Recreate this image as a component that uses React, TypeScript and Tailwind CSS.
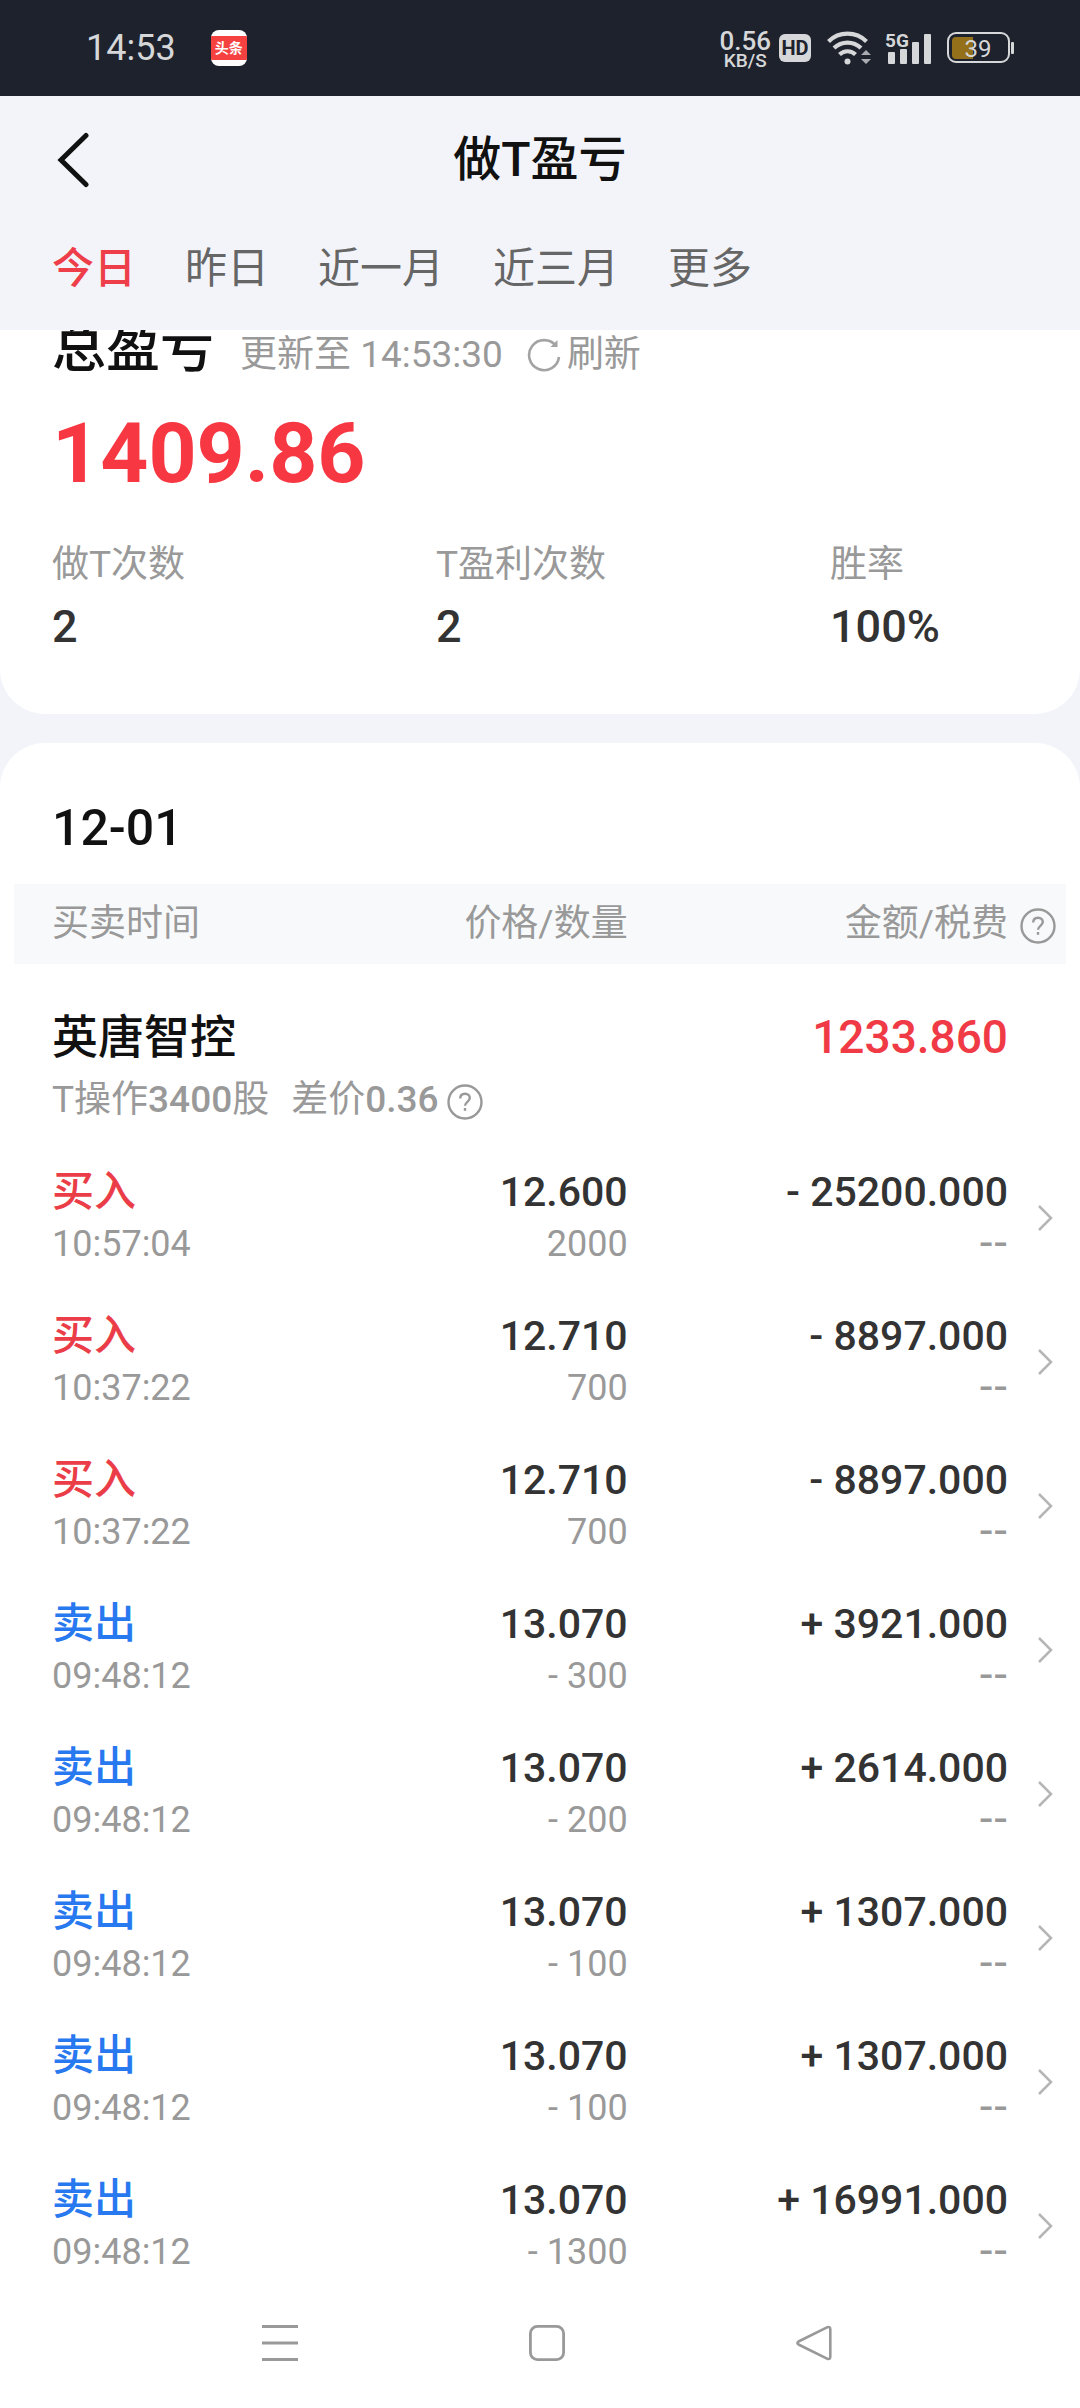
import { useState } from "react";

type Side = "buy" | "sell";

interface Trade {
  side: Side;
  time: string;
  price: string;
  qty: string;
  amount: string;
  fee: string;
}

const RANGES = ["今日", "昨日", "近一月", "近三月", "更多"];

const STATS = [
  { label: "做T次数", value: "2" },
  { label: "T盈利次数", value: "2" },
  { label: "胜率", value: "100%" },
];

const TRADES: Trade[] = [
  { side: "buy", time: "10:57:04", price: "12.600", qty: "2000", amount: "- 25200.000", fee: "--" },
  { side: "buy", time: "10:37:22", price: "12.710", qty: "700", amount: "- 8897.000", fee: "--" },
  { side: "buy", time: "10:37:22", price: "12.710", qty: "700", amount: "- 8897.000", fee: "--" },
  { side: "sell", time: "09:48:12", price: "13.070", qty: "- 300", amount: "+ 3921.000", fee: "--" },
  { side: "sell", time: "09:48:12", price: "13.070", qty: "- 200", amount: "+ 2614.000", fee: "--" },
  { side: "sell", time: "09:48:12", price: "13.070", qty: "- 100", amount: "+ 1307.000", fee: "--" },
  { side: "sell", time: "09:48:12", price: "13.070", qty: "- 100", amount: "+ 1307.000", fee: "--" },
  { side: "sell", time: "09:48:12", price: "13.070", qty: "- 1300", amount: "+ 16991.000", fee: "--" },
];

export default function App() {
  return (
    <div className="min-h-screen bg-white text-[#111] font-['Roboto','Noto_Sans_CJK_SC',sans-serif]">
      <StatusBar />
      <Header />
      <main className="bg-[#f3f4f9] flex flex-col gap-[29px]">
        <Summary />
        <DayCard />
      </main>
      <NavBar />
    </div>
  );
}

function StatusBar() {
  return (
    <div className="h-24 bg-[#1e222d] text-[#d6d7d9] flex items-center justify-between pl-[86px] pr-[66px]">
      <div className="flex items-center gap-[35px]">
        <span className="text-[36px] leading-none">14:53</span>
        <span className="size-9 rounded-lg bg-white flex items-center overflow-hidden">
          <span className="w-full h-6 bg-[#f5413f] text-white text-[14px] leading-6 font-bold text-center">头条</span>
        </span>
      </div>
      <div className="flex items-center">
        <div className="flex flex-col items-center font-medium mr-2 pt-1">
          <span className="text-[26px] leading-[22px]">0.56</span>
          <span className="text-[19px] leading-[18px]">KB/S</span>
        </div>
        <span className="w-8 h-7 rounded-md bg-[#d6d7d9] text-[#1e222d] text-[20px] leading-7 font-bold text-center mr-4">
          HD
        </span>
        <WifiIcon />
        <SignalIcon />
        <BatteryIcon />
      </div>
    </div>
  );
}

function Header() {
  const [range, setRange] = useState(RANGES[0]);

  return (
    <header className="bg-[#f3f4f9]">
      <div className="h-[124px] pt-1 grid grid-cols-[1fr_auto_1fr] items-center">
        <button aria-label="返回" className="justify-self-start ml-[52px]">
          <svg width="40" height="56" viewBox="0 0 40 56" fill="none" stroke="#111" strokeWidth="5" strokeLinecap="round">
            <path d="M34 3.500 9 28l25 24.500" />
          </svg>
        </button>
        <h1 className="text-[48px] leading-[60px] font-medium">做T盈亏</h1>
      </div>
      <nav className="flex gap-[49px] px-[52px] pt-[19px] pb-[31px]">
        {RANGES.map((r) => (
          <button
            key={r}
            onClick={() => setRange(r)}
            className={
              r === range
                ? "text-[42px] leading-[60px] font-medium text-[#ee3e49]"
                : "text-[42px] leading-[60px] text-[#666]"
            }
          >
            {r}
          </button>
        ))}
      </nav>
    </header>
  );
}

function Summary() {
  return (
    <section className="bg-white rounded-b-[45px] overflow-hidden px-[52px] pb-[57px]">
      {/* title row is partly scrolled under the header */}
      <div className="-mt-[11px] flex items-baseline leading-[60px]">
        <h2 className="text-[54px] font-medium">总盈亏</h2>
        <span className="ml-[26px] text-[37px] text-[#999]">更新至 14:53:30</span>
        <button className="ml-6 flex items-baseline gap-[6px] text-[37px] text-[#999]">
          <RefreshIcon />
          <span>刷新</span>
        </button>
      </div>
      <div className="mt-6 text-[84px] leading-[90px] font-bold text-[#f73843]">1409.86</div>
      <dl className="mt-[42px] grid grid-cols-[384fr_394fr_198fr]">
        {STATS.map((s) => (
          <div key={s.label}>
            <dt className="text-[37px] leading-[48px] text-[#999] whitespace-nowrap">{s.label}</dt>
            <dd className="mt-2 text-[45px] leading-[60px] font-medium text-[#333]">{s.value}</dd>
          </div>
        ))}
      </dl>
    </section>
  );
}

function DayCard() {
  return (
    <section className="bg-white rounded-t-[45px] px-[14px] pt-[55px]">
      <h2 className="pl-[38px] mb-[26px] text-[50px] leading-[60px] font-medium">12-01</h2>
      <table className="w-full table-fixed border-collapse">
        <colgroup>
          <col className="w-7/24" />
          <col className="w-7/24" />
          <col />
          <col className="w-[58px]" />
        </colgroup>
        <thead>
          <tr className="h-20 bg-[#f8f9fb] text-[37px] leading-[48px] text-[#999]">
            <th className="pl-[38px] text-left font-normal">买卖时间</th>
            <th className="text-right font-normal">价格/数量</th>
            <th className="text-right font-normal">金额/税费</th>
            <th className="pl-3">
              <HelpButton label="金额/税费说明" />
            </th>
          </tr>
        </thead>
        <tbody>
          <tr className="h-[182px] align-top">
            <td colSpan={2} className="pl-[38px] pt-[43px]">
              <div className="text-[46px] leading-[60px] font-medium">英唐智控</div>
              <div className="mt-[3px] flex items-center text-[37px] leading-[60px] text-[#999]">
                <span>
                  T操作<b className="font-medium">3400</b>股
                </span>
                <span className="ml-[22px] mr-2">
                  差价<b className="font-medium">0.36</b>
                </span>
                <HelpButton label="差价说明" />
              </div>
            </td>
            <td className="pt-[43px] text-right text-[46px] leading-[60px] font-medium text-[#f03a45]">1233.860</td>
            <td />
          </tr>
          {TRADES.map((t, i) => (
            <TradeRow key={i} t={t} />
          ))}
        </tbody>
      </table>
    </section>
  );
}

function TradeRow({ t }: { t: Trade }) {
  return (
    <tr className="h-36 leading-[52px] text-right">
      <td className="pl-[38px] text-left">
        <div className={t.side === "buy" ? "text-[42px] font-medium text-[#ea3d48]" : "text-[42px] font-medium text-[#2878f0]"}>
          {t.side === "buy" ? "买入" : "卖出"}
        </div>
        <div className="text-[36px] text-[#999]">{t.time}</div>
      </td>
      <td>
        <div className="text-[41px] font-medium text-[#333]">{t.price}</div>
        <div className="text-[36px] text-[#999]">{t.qty}</div>
      </td>
      <td>
        <div className="text-[41px] font-medium text-[#333]">{t.amount}</div>
        <div className="text-[36px] text-[#999]">
          <span className="text-[41px] leading-none font-medium font-['Noto_Sans_CJK_SC',sans-serif]">{t.fee}</span>
        </div>
      </td>
      <td>
        <button aria-label="查看详情" className="block ml-[29px]">
          <svg width="18" height="28" viewBox="0 0 18 28" fill="none" stroke="#b5b5b5" strokeWidth="2.500">
            <path d="M2 2l12 12L2 26" />
          </svg>
        </button>
      </td>
    </tr>
  );
}

function HelpButton({ label }: { label: string }) {
  return (
    <button aria-label={label} className="block pt-1">
      <svg width="36" height="36" viewBox="0 0 36 36" fill="none" stroke="#999" strokeWidth="2.400">
        <circle cx="18" cy="18" r="16.500" />
        <path d="M13.200 14.500c0-3 2-4.800 4.800-4.800s4.800 1.800 4.800 4.400c0 3.600-4.800 3.900-4.800 7.700" />
        <path d="M18 24v2.800" />
      </svg>
    </button>
  );
}

function RefreshIcon() {
  return (
    <svg className="self-center" width="34" height="34" viewBox="0 0 34 34" fill="none" stroke="#a3a3a3" strokeWidth="2.600">
      <path d="M29 8A15 15 0 1 0 32 19" />
      <path d="M23.500 9h7V2z" fill="#a3a3a3" stroke="none" />
    </svg>
  );
}

function WifiIcon() {
  return (
    <svg className="mr-[14px]" width="44" height="36" viewBox="0 0 44 36" fill="none" stroke="#d6d7d9" strokeWidth="4.200">
      <path d="M1.500 11.500a27 27 0 0 1 38 0" />
      <path d="M7 18a19.500 19.500 0 0 1 27 0" />
      <path d="M12.500 24.500a11.500 11.500 0 0 1 16 0" />
      <circle cx="20.500" cy="31.500" r="3" fill="#d6d7d9" stroke="none" />
      <path d="M34 25l5-5 5 5zM34 29l5 5 5-5z" fill="#a9abb0" stroke="none" />
    </svg>
  );
}

function SignalIcon() {
  return (
    <svg className="mr-4 overflow-visible" width="46" height="34" viewBox="0 0 46 34" fill="#d6d7d9">
      <text x="0" y="16" fontSize="19" fontWeight="700">5G</text>
      <rect x="3" y="21" width="7" height="12" rx="1" />
      <rect x="15" y="18" width="7" height="15" rx="1" />
      <rect x="27" y="11" width="7" height="22" rx="1" />
      <rect x="39" y="3" width="7" height="30" rx="1" />
    </svg>
  );
}

function BatteryIcon() {
  return (
    <svg width="67" height="32" viewBox="0 0 67 32" fill="none">
      <rect x="1" y="1" width="61" height="29" rx="8" stroke="#d6d7d9" strokeWidth="2" />
      <path d="M9 5h17v22H9a4 4 0 0 1-4-4V9a4 4 0 0 1 4-4z" fill="#94701a" />
      <rect x="64" y="10" width="3" height="12" rx="1" fill="#d6d7d9" />
      <text x="31" y="25" fontSize="24" textAnchor="middle" fill="#d6d7d9">39</text>
    </svg>
  );
}

function NavBar() {
  return (
    <nav className="grid grid-cols-3 justify-items-center bg-white pl-[146px] pr-[133px] pt-[27px] pb-12">
      <button aria-label="最近任务">
        <svg width="36" height="36" viewBox="0 0 36 36" stroke="#999" strokeWidth="3">
          <path d="M0 1.500h36M0 18h36M0 34.500h36" />
        </svg>
      </button>
      <button aria-label="主屏幕">
        <svg width="36" height="36" viewBox="0 0 36 36" fill="none" stroke="#999" strokeWidth="2.800">
          <rect x="1.400" y="1.400" width="33.200" height="33.200" rx="7" />
        </svg>
      </button>
      <button aria-label="返回上一级">
        <svg width="36" height="36" viewBox="0 0 36 36" fill="none" stroke="#999" strokeWidth="2.600" strokeLinejoin="round">
          <path d="M31.500 2.200 2.500 16.500q-2.200 1.500 0 3L31.500 33.800q2.800 1 2.800-2V4.200q0-3-2.800-2z" />
        </svg>
      </button>
    </nav>
  );
}
